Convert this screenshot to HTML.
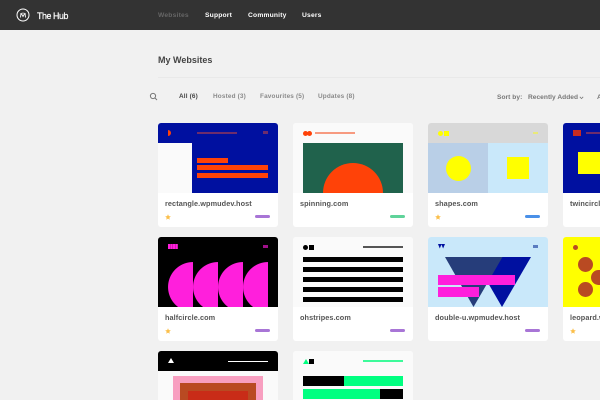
<!DOCTYPE html>
<html style="width:600px;height:400px;overflow:hidden"><head><meta charset="utf-8"><style>
*{box-sizing:border-box}
html,body{margin:0;padding:0}
body{width:600px;height:400px;overflow:hidden;background:#f1f1f1;position:relative;font-family:"Liberation Sans",sans-serif}
#w{position:absolute;left:0;top:0;width:600px;height:400px;overflow:hidden;background:#f1f1f1;filter:blur(.25px)}
.a{position:absolute}
.t{position:absolute;white-space:nowrap;font-weight:700;line-height:10px;height:10px}
.nav{font-size:6.7px;color:#fff;top:10.5px;letter-spacing:.2px}
.f{font-size:6.4px;color:#8a8a8a;top:92px;letter-spacing:.17px}
.card{position:absolute;width:120px;height:104px;background:#fff;border-radius:3px;overflow:hidden}
.th{position:absolute;left:0;top:0;width:120px;height:70px;overflow:hidden}
.th div,.th svg{position:absolute}
.name{position:absolute;left:7px;top:76px;font-size:7.3px;font-weight:700;color:#555;line-height:10px;white-space:nowrap;letter-spacing:.08px}
.pill{position:absolute;left:97px;top:92px;width:15px;height:3px;border-radius:2px;background:#a875d6}
.star{position:absolute;left:7px;top:90.5px;width:6px;height:6px}
</style></head><body><div id="w">
<div class="a" style="left:0;top:0;width:600px;height:30px;background:#333"></div>
<svg class="a" style="left:16px;top:8px" width="14" height="14" viewBox="0 0 14 14" fill="none" stroke="#fff"><circle cx="7" cy="7" r="6" stroke-width="1"/><path d="M4.5 9.500L5 5M5 5L7 8.500L9 5M9 5L9.500 9.500M7 4.500V6" stroke-width=".9"/></svg>
<div class="t" style="left:37px;top:10.5px;font-size:8.8px;font-weight:400;color:#fff;-webkit-text-stroke:.2px #fff;letter-spacing:-.4px">The Hub</div>
<div class="t nav" style="left:158px;color:#666">Websites</div>
<div class="t nav" style="left:205px">Support</div>
<div class="t nav" style="left:248px">Community</div>
<div class="t nav" style="left:302px">Users</div>

<div class="t" style="left:158px;top:55px;font-size:9px;color:#444">My Websites</div>
<div class="a" style="left:158px;top:77px;width:442px;height:1px;background:#e9e9e9"></div>
<svg class="a" style="left:149px;top:92px" width="9" height="9" viewBox="0 0 9 9" fill="none" stroke="#777" stroke-width="1"><circle cx="4" cy="4" r="2.600"/><path d="M6 6L8 8"/></svg>
<div class="t f" style="left:179px;color:#444">All (6)</div>
<div class="t f" style="left:213px">Hosted (3)</div>
<div class="t f" style="left:260px">Favourites (5)</div>
<div class="t f" style="left:318px">Updates (8)</div>
<div class="t f" style="left:497px;top:93px;color:#777;font-size:6.6px;letter-spacing:.05px">Sort by:</div>
<div class="t f" style="left:528px;top:93px;color:#777;font-size:6.6px;letter-spacing:.03px">Recently Added</div>
<svg class="a" style="left:579px;top:95.5px" width="5" height="4" viewBox="0 0 5 4" fill="none" stroke="#777" stroke-width=".8"><path d="M.8 .8L2.500 2.600L4.200 .8"/></svg>
<div class="t f" style="left:597px;top:93px;color:#777;font-size:6.6px;width:3px;overflow:hidden">A</div>

<!-- Row 1 -->
<div class="card" style="left:158px;top:123px">
 <div class="th" style="background:#0010a0">
  <div style="left:10px;top:7px;width:3px;height:6px;background:#ff4208;border-radius:0 3px 3px 0"></div>
  <div style="left:39px;top:9px;width:40px;height:2px;background:#6d2c6c"></div>
  <div style="left:105px;top:8px;width:5px;height:3px;background:#6d2c6c"></div>
  <div style="left:0;top:20px;width:34px;height:50px;background:#fafafa"></div>
  <div style="left:39px;top:35px;width:31px;height:5px;background:#ff4208"></div>
  <div style="left:39px;top:42px;width:71px;height:5px;background:#ff4208"></div>
  <div style="left:39px;top:50px;width:71px;height:5px;background:#ff4208"></div>
 </div>
 <div class="name">rectangle.wpmudev.host</div>
 <svg class="star" viewBox="0 0 10 10"><path d="M5 .5L6.400 3.600L9.700 4L7.200 6.200L7.900 9.500L5 7.800L2.100 9.500L2.800 6.200L.3 4L3.600 3.600Z" fill="#fbbf4a"/></svg>
 <div class="pill"></div>
</div>
<div class="card" style="left:293px;top:123px">
 <div class="th" style="background:#fafafa">
  <div style="left:10px;top:8px;width:5px;height:5px;border-radius:50%;background:#ff4208"></div>
  <div style="left:14px;top:8px;width:5px;height:5px;border-radius:50%;background:#ff4208"></div>
  <div style="left:22px;top:9px;width:40px;height:2px;background:#f79a80"></div>
  <div style="left:10px;top:20px;width:100px;height:50px;background:#20624c;overflow:hidden"><div style="left:20px;top:20px;width:60px;height:60px;border-radius:50%;background:#ff4208"></div></div>
 </div>
 <div class="name">spinning.com</div>
 <div class="pill" style="background:#5fd39a"></div>
</div>
<div class="card" style="left:428px;top:123px">
 <div class="th" style="background:#d8d8d8">
  <div style="left:10px;top:8px;width:5px;height:5px;border-radius:50%;background:#ffff00"></div>
  <div style="left:16px;top:8px;width:5px;height:5px;background:#ffff00"></div>
  <div style="left:105px;top:9px;width:5px;height:2px;background:#e9e97a"></div>
  <div style="left:0;top:20px;width:60px;height:50px;background:#b9cfe7"></div>
  <div style="left:60px;top:20px;width:60px;height:50px;background:#c9e8fa"></div>
  <div style="left:17.500px;top:32.500px;width:25px;height:25px;border-radius:50%;background:#ffff00"></div>
  <div style="left:79px;top:34px;width:22px;height:22px;background:#ffff00"></div>
 </div>
 <div class="name">shapes.com</div>
 <svg class="star" viewBox="0 0 10 10"><path d="M5 .5L6.400 3.600L9.700 4L7.200 6.200L7.900 9.500L5 7.800L2.100 9.500L2.800 6.200L.3 4L3.600 3.600Z" fill="#fbbf4a"/></svg>
 <div class="pill" style="background:#4a90e8"></div>
</div>
<div class="card" style="left:563px;top:123px;width:37px;border-radius:3px 0 0 3px">
 <div class="th" style="background:#0010a0;width:37px">
  <div style="left:10px;top:7px;width:8px;height:6px;background:#c92c20"></div>
  <div style="left:23px;top:9px;width:14px;height:2px;background:#6d2c6c"></div>
  <div style="left:15px;top:29px;width:22px;height:22px;background:#ffff00"></div>
 </div>
 <div class="name" style="width:30px;overflow:hidden">twincircle.com</div>
</div>

<!-- Row 2 -->
<div class="card" style="left:158px;top:237px">
 <div class="th" style="background:#000">
  <div style="left:10px;top:7px;width:10px;height:5px;background:repeating-linear-gradient(90deg,#ff1fdc 0 2px,#a0108a 2px 2.500px)"></div>
  <div style="left:105px;top:8px;width:5px;height:3px;background:#a0108a"></div>
  <div style="left:10px;top:25px;width:25px;height:45px;background:radial-gradient(circle 25px at 25px 25px,#ff1fdc 24.7px,transparent 25.2px)"></div>
  <div style="left:35px;top:25px;width:25px;height:45px;background:radial-gradient(circle 25px at 25px 25px,#ff1fdc 24.7px,transparent 25.2px)"></div>
  <div style="left:60px;top:25px;width:25px;height:45px;background:radial-gradient(circle 25px at 25px 25px,#ff1fdc 24.7px,transparent 25.2px)"></div>
  <div style="left:85px;top:25px;width:25px;height:45px;background:radial-gradient(circle 25px at 25px 25px,#ff1fdc 24.7px,transparent 25.2px)"></div>
 </div>
 <div class="name">halfcircle.com</div>
 <svg class="star" viewBox="0 0 10 10"><path d="M5 .5L6.400 3.600L9.700 4L7.200 6.200L7.900 9.500L5 7.800L2.100 9.500L2.800 6.200L.3 4L3.600 3.600Z" fill="#fbbf4a"/></svg>
 <div class="pill"></div>
</div>
<div class="card" style="left:293px;top:237px">
 <div class="th" style="background:#fafafa">
  <div style="left:10px;top:7.500px;width:5px;height:5px;border-radius:50%;background:#000"></div>
  <div style="left:16px;top:7.500px;width:5px;height:5px;background:#000"></div>
  <div style="left:70px;top:9px;width:40px;height:2px;background:#555"></div>
  <div style="left:10px;top:20px;width:100px;height:5px;background:#000"></div>
  <div style="left:10px;top:30px;width:100px;height:5px;background:#000"></div>
  <div style="left:10px;top:40px;width:100px;height:5px;background:#000"></div>
  <div style="left:10px;top:50px;width:100px;height:5px;background:#000"></div>
  <div style="left:10px;top:60px;width:100px;height:5px;background:#000"></div>
 </div>
 <div class="name">ohstripes.com</div>
 <div class="pill"></div>
</div>
<div class="card" style="left:428px;top:237px">
 <div class="th" style="background:#c9e8fa">
  <svg style="left:10px;top:7px" width="7" height="5" viewBox="0 0 7 5"><path d="M0 0H3.600L1.800 4.500ZM3.200 0H7L5.100 4.500Z" fill="#0010a0"/></svg>
  <div style="left:105px;top:8px;width:5px;height:3px;background:#5a7cc0"></div>
  <svg style="left:0;top:0" width="120" height="70" viewBox="0 0 120 70"><path d="M45 20H103L74 70Z" fill="#0010a0"/><path d="M17 20H74.500L45.500 70Z" fill="#263d7a"/></svg>
  <div style="left:10px;top:38px;width:77px;height:10px;background:#ff1fdc"></div>
  <div style="left:10px;top:50px;width:41px;height:10px;background:#ff1fdc"></div>
 </div>
 <div class="name">double-u.wpmudev.host</div>
 <div class="pill"></div>
</div>
<div class="card" style="left:563px;top:237px;width:37px;border-radius:3px 0 0 3px">
 <div class="th" style="background:#ffff00;width:37px">
  <div style="left:9.500px;top:7.500px;width:5px;height:5px;border-radius:50%;background:#b94a22"></div>
  <div style="left:14.500px;top:20px;width:15px;height:15px;border-radius:50%;background:#b94a22"></div>
  <div style="left:28px;top:33px;width:9px;height:15px;border-radius:7.500px 0 0 7.500px;background:#b94a22"></div>
  <div style="left:14.500px;top:45px;width:15px;height:15px;border-radius:50%;background:#b94a22"></div>
 </div>
 <div class="name" style="width:30px;overflow:hidden">leopard.wpmudev.host</div>
 <svg class="star" viewBox="0 0 10 10"><path d="M5 .5L6.400 3.600L9.700 4L7.200 6.200L7.900 9.500L5 7.800L2.100 9.500L2.800 6.200L.3 4L3.600 3.600Z" fill="#fbbf4a"/></svg>
</div>

<!-- Row 3 -->
<div class="card" style="left:158px;top:351px;height:49px;border-radius:3px 3px 0 0">
 <div class="th" style="background:#fafafa;height:49px">
  <div style="left:0;top:0;width:120px;height:20px;background:#000"></div>
  <svg style="left:10px;top:7px" width="6" height="5" viewBox="0 0 6 5"><path d="M3 0L6 5H0Z" fill="#fff"/></svg>
  <div style="left:70px;top:9.500px;width:40px;height:1px;background:#fff"></div>
  <div style="left:15px;top:25px;width:90px;height:24px;background:#f89fc0"></div>
  <div style="left:22px;top:32px;width:76px;height:17px;background:#b94a22"></div>
  <div style="left:30px;top:40px;width:60px;height:9px;background:#c92c18"></div>
 </div>
</div>
<div class="card" style="left:293px;top:351px;height:49px;border-radius:3px 3px 0 0">
 <div class="th" style="background:#fafafa;height:49px">
  <svg style="left:10px;top:8px" width="6" height="5" viewBox="0 0 6 5"><path d="M3 0L6 5H0Z" fill="#00ff80"/></svg>
  <div style="left:16px;top:8px;width:5px;height:5px;background:#000"></div>
  <div style="left:70px;top:9px;width:40px;height:2px;background:#3dfa9a"></div>
  <div style="left:10px;top:25px;width:41px;height:10px;background:#000"></div>
  <div style="left:51px;top:25px;width:59px;height:10px;background:#00ff80"></div>
  <div style="left:10px;top:38px;width:77px;height:10px;background:#00ff80"></div>
  <div style="left:87px;top:38px;width:23px;height:10px;background:#000"></div>
 </div>
</div>
</div></body></html>
